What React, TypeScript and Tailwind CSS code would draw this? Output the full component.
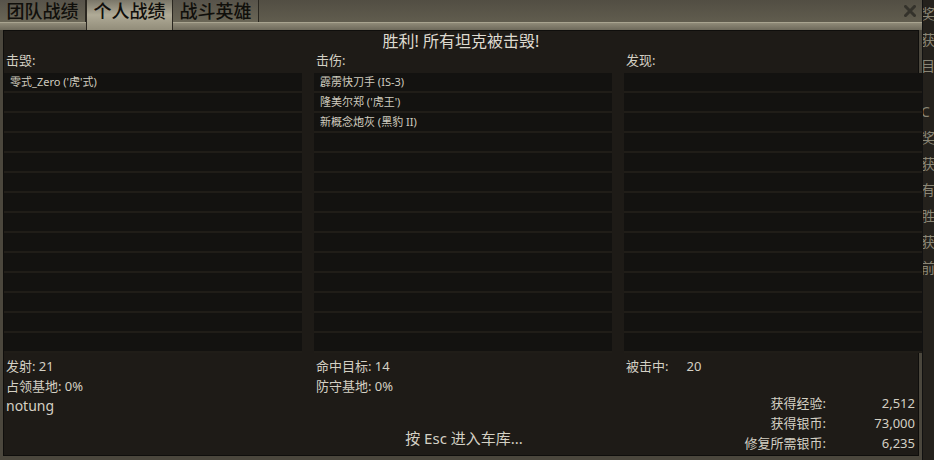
import React from "react";

const font = { fontFamily: '"Noto Sans", "Noto Sans CJK SC", sans-serif' };

function ListCol({ items }: { items: string[] }) {
  const rows = Array.from({ length: 14 }, (_, i) => items[i] ?? "");
  return (
    <div className="flex flex-col bg-[#1a1814]">
      {rows.map((t, i) => (
        <div
          key={i}
          className="h-[20px] shrink-0 bg-[#131210] border-b-2 border-[#201d18] pl-[6px] text-[11px] leading-[18px] text-[#cfcbbf] whitespace-nowrap"
        >
          {t}
        </div>
      ))}
    </div>
  );
}

function Tab({ label, active }: { label: string; active?: boolean }) {
  return (
    <div
      className={
        active
          ? "h-[30px] w-[87px] flex items-start pt-[1px] justify-center border-r border-l border-[#2a2720] bg-gradient-to-b from-[#7a7668] via-[#b0ab97] to-[#928d7a] z-10"
          : "h-[22px] w-[86px] flex items-center justify-center border-r border-[#2a2720] bg-gradient-to-b from-[#57534a] to-[#6a6656]"
      }
    >
      <span className="text-[18px] leading-[20px] font-medium text-[color:#100f0b]">{label}</span>
    </div>
  );
}

export default function App() {
  return (
    <div className="w-[934px] h-[460px] flex overflow-hidden bg-[#1c1a16]" style={font}>
      {/* window */}
      <div className="w-[922px] h-[460px] flex flex-col bg-[#4b473d] shrink-0">
        {/* tab bar */}
        <div className="h-[30px] shrink-0 flex flex-col bg-gradient-to-b from-[#524e43] to-[#666252]">
          <div className="h-[22px] flex items-start">
            <Tab label="团队战绩" />
            <Tab label="个人战绩" active />
            <Tab label="战斗英雄" />
            <div className="flex-1" />
            <div className="w-[24px] h-[22px] flex items-center justify-center">
              <svg width="12" height="12" viewBox="0 0 12 12">
                <path d="M1.5 1.5 L10.5 10.5 M10.5 1.5 L1.5 10.5" stroke="#34322b" strokeWidth="3" strokeLinecap="square" />
              </svg>
            </div>
          </div>
          <div className="h-[8px] bg-gradient-to-b from-[#8f8a78] to-[#6e6a5b] border-t border-[#a9a490]" />
        </div>
        {/* content panel */}
        <div className="flex-1 mx-[3px] border border-[#0f0e0c] bg-[#1e1b17] flex flex-col text-[#d4d0c4]">
          <div className="h-[19px] flex items-center justify-center text-[16px] text-[#dedad0] leading-none">
            胜利! 所有坦克被击毁!
          </div>
          <div className="grid grid-cols-[298px_298px_298px] gap-x-[12px]">
            <div className="h-[21px] flex items-center pl-[2px] text-[13px]">击毁:</div>
            <div className="h-[21px] flex items-center pl-[2px] text-[13px]">击伤:</div>
            <div className="h-[21px] flex items-center pl-[2px] text-[13px]">发现:</div>
            <div className="mt-[2px]">
              <ListCol items={["零式_Zero ('虎'式)"]} />
            </div>
            <div className="mt-[2px]">
              <ListCol items={["霹雳快刀手 (IS-3)", "隆美尔郑 ('虎王')", "新概念炮灰 (黑豹 II)"]} />
            </div>
            <div className="mt-[2px]">
              <ListCol items={[]} />
            </div>
            {/* stats */}
            <div className="h-[101px] flex flex-col pt-[3px] pl-[2px] text-[13px] leading-[20px]">
              <div>发射: 21</div>
              <div>占领基地: 0%</div>
              <div className="text-[14px]">notung</div>
            </div>
            <div className="h-[101px] flex flex-col pt-[3px] pl-[2px] text-[13px] leading-[20px]">
              <div>命中目标: 14</div>
              <div>防守基地: 0%</div>
              <div className="mt-auto mb-[6px] text-center text-[15px] leading-[20px]">按 Esc 进入车库...</div>
            </div>
            <div className="h-[101px] flex flex-col pt-[3px] pl-[2px] text-[13px] leading-[20px]">
              <div>
                被击中:<span className="ml-[18px]">20</span>
              </div>
              <div className="mt-auto mb-[1px] grid grid-cols-[auto_89px] justify-end pr-[7px] text-[13px] leading-[20px]">
                <div className="text-right">获得经验:</div>
                <div className="text-right">2,512</div>
                <div className="text-right">获得银币:</div>
                <div className="text-right">73,000</div>
                <div className="text-right">修复所需银币:</div>
                <div className="text-right">6,235</div>
              </div>
            </div>
          </div>
        </div>
        <div className="h-[4px] shrink-0" />
      </div>
      {/* background page strip */}
      <div className="flex-1 border-l border-[#111] bg-[#24211c] overflow-hidden">
        <div className="flex flex-col pt-[2px] -ml-[2px] text-[14px] leading-[24px] text-[#8a8676] gap-[2px] whitespace-nowrap">
          <div>奖</div>
          <div>获</div>
          <div>目</div>
          <div className="mt-[20px]">C</div>
          <div>奖</div>
          <div>获</div>
          <div>有</div>
          <div>胜</div>
          <div>获</div>
          <div>前</div>
        </div>
      </div>
    </div>
  );
}
